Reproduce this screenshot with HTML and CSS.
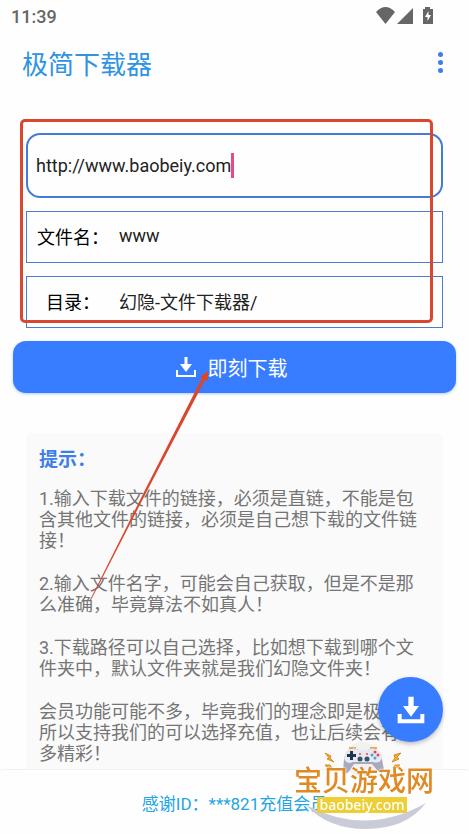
FILE: index.html
```html
<!DOCTYPE html>
<html lang="zh">
<head>
  <meta charset="UTF-8">
  <meta name="viewport" content="width=device-width, initial-scale=1.0">
  <title>极简下载器</title>
  <link rel="stylesheet" href="styles.css">
</head>
<body>
  <div class="status">
    <span class="time">11:39</span>
    <svg width="60" height="20" viewBox="0 0 60 20" fill="#666" aria-hidden="true">
      <path d="M1 6 Q10.500 -4 20 6 L10.500 18 Z"/>
      <path d="M22 18 L38 2 V18 Z"/>
      <path d="M48 3 h2 v-2 h5 v2 h3 v15 h-10 Z"/>
      <path fill="#fff" d="M53.500 5 L50 11 H52.500 V15 L56 9 H53.500 Z"/>
    </svg>
  </div>

  <header class="header">
    <h1 class="title">极简下载器</h1>
    <button class="menu" aria-label="菜单"><i></i><i></i><i></i></button>
  </header>

  <main class="main">
    <form class="form">
      <div class="field url">
        <input class="url-input" type="text" aria-label="下载链接" value="http://www.baobeiy.com">
        <span class="caret"></span>
      </div>
      <div class="field">
        <label for="fileName">文件名：</label>
        <input id="fileName" type="text" value="www">
      </div>
      <div class="field">
        <label for="folder">目录：</label>
        <input id="folder" type="text" value="幻隐-文件下载器/">
      </div>
      <div class="mark"></div>
    </form>

    <div class="action">
      <button class="btn" type="button">
        <svg width="24" height="24" viewBox="0 0 24 24" fill="#fff" aria-hidden="true">
          <path d="M10.500 2 h3 v7 h4.500 l-6 8 l-6 -8 h4.500 Z"/>
          <path d="M2 15 h2 v5 h16 v-5 h2 v7 h-20 Z"/>
        </svg>
        即刻下载
      </button>
      <svg class="arrow" width="120" height="230" viewBox="0 0 120 230" fill="#d9472f" aria-hidden="true">
        <path d="M118 0 L118 10 L115 9 L57 120 L1 229 L0 229 L55 119 L112 7 L110 6 Z"/>
      </svg>
    </div>

    <section class="tips">
      <h2>提示：</h2>
      <p>1.输入下载文件的链接，必须是直链，不能是包含其他文件的链接，必须是自己想下载的文件链接！</p>
      <p>2.输入文件名字，可能会自己获取，但是不是那么准确，毕竟算法不如真人！</p>
      <p>3.下载路径可以自己选择，比如想下载到哪个文件夹中，默认文件夹就是我们幻隐文件夹！</p>
      <p>会员功能可能不多，毕竟我们的理念即是极简，所以支持我们的可以选择充值，也让后续会有更多精彩！</p>
    </section>
  </main>

  <footer class="footer">感谢ID：***821充值会员</footer>

  <button class="fab" aria-label="下载">
    <svg width="32" height="32" viewBox="0 0 24 24" fill="#fff" aria-hidden="true">
      <path d="M10 2 h4 v7 h4 l-6 8 l-6 -8 h4 Z"/>
      <path d="M2 15 h3 v4 h14 v-4 h3 v7 h-20 Z"/>
    </svg>
  </button>

  <div class="brand">
    <svg class="brand-art" width="140" height="92" viewBox="0 0 140 92" aria-hidden="true">
      <circle cx="68" cy="18" r="17" fill="#f1f1f1"/>
      <path fill="#c9cbd8" d="M12 64 Q72 96 132 62 Q112 88 72 88 Q34 88 12 64 Z"/>
      <g fill="#eeb02e" stroke="#d98a2b" stroke-width="1">
        <path d="M31 12 L37 15 L36 17 L40 21 L33 18 L35 17 Z"/>
        <path d="M107 12 L100 14 L101 17 L98 21 L105 18 L103 16 Z"/>
        <path d="M31 24 L36 24 L38 27 L33 26 Z"/>
        <path d="M106 24 L101 24 L99 27 L104 26 Z"/>
      </g>
      <path d="M55 7 h7 M76 7 h7" fill="none" stroke="#e9b13c" stroke-width="2"/>
      <path fill="#a7aabd" d="M55 9 Q60 6 65 9 H73 Q78 6 83 9 Q87 11 88 18 L90 29 Q88 35 83 29 L78 23 H60 L56 29 Q51 36 49 30 L50 18 Q51 11 55 9 Z"/>
      <path fill="#e7e8f0" d="M55 9 Q60 6 65 9 H73 Q78 6 83 9 Q88 11 88 17 Q86 23 79 21 H59 Q52 24 50 17 Q51 11 55 9 Z"/>
      <path fill="#20344f" d="M56 10 h3 v3 h3 v3 h-3 v3 h-3 v-3 h-3 v-3 h3 Z"/>
      <g fill="#35556b"><circle cx="66" cy="18" r="2.500"/><circle cx="73" cy="18" r="2.500"/></g>
      <g fill="#e2484d"><circle cx="81" cy="11" r="1.500"/><circle cx="84" cy="14" r="1.500"/><circle cx="66" cy="13" r="1"/><circle cx="73" cy="13" r="1"/></g>
      <g fill="#4aa3d8"><circle cx="78" cy="14" r="1.500"/><circle cx="81" cy="17" r="1.500"/></g>
    </svg>
    <div class="brand-name">宝贝游戏网</div>
    <div class="brand-url">baobeiy.com</div>
  </div>
</body>
</html>
```
FILE: styles.css
```css
* {
  box-sizing: border-box;
}
body {
  font-family: Roboto, "Noto Sans CJK SC", sans-serif;
  background: #fefefe;
  margin: 0;
  min-height: 100vh;
  position: relative;
}
button, input {
  font-family: inherit;
}
.status {
  display: flex;
  justify-content: space-between;
  align-items: center;
  height: 32px;
  padding: 0 34px 0 11px;
  color: #666;
}
.time {
  font-size: 18px;
  font-weight: 500;
}
.header {
  display: flex;
  justify-content: space-between;
  align-items: center;
  height: 60px;
  padding: 0 22px;
}
.title {
  margin: 0;
  font-size: 26px;
  font-weight: 400;
  color: #2f93e4;
}
.menu {
  display: flex;
  flex-direction: column;
  align-items: center;
  gap: 3px;
  padding: 4px;
  border: none;
  background: none;
}
.menu i {
  width: 5px;
  height: 5px;
  border-radius: 50%;
  background: #3f7de8;
}
.main {
  padding-top: 41px;
}
.form {
  position: relative;
  display: flex;
  flex-direction: column;
  gap: 13px;
  padding: 0 26px;
}
.field {
  display: flex;
  align-items: center;
  height: 52px;
  padding: 0 10px 3px;
  border: 1px solid #4a7dcf;
}
.field label {
  width: 72px;
  margin-right: 10px;
  text-align: center;
  font-size: 18px;
  color: #000;
}
.field input {
  flex: 1;
  min-width: 0;
  padding: 0;
  border: none;
  outline: none;
  background: none;
  font-size: 18px;
  color: #222;
}
.field.url {
  height: 65px;
  padding: 0 8px;
  border: 2px solid #437bd9;
  border-radius: 14px;
}
.field .url-input {
  flex: none;
  field-sizing: content;
}
.caret {
  width: 3px;
  height: 25px;
  background: #e84a87;
}
/* red highlight frame around the inputs */
.mark {
  position: absolute;
  top: -14px;
  right: 36px;
  bottom: 5px;
  left: 20px;
  border: 3px solid #d9472f;
  border-radius: 5px;
}
.action {
  position: relative;
  padding: 13px 13px 0;
}
.btn {
  display: flex;
  justify-content: center;
  align-items: center;
  gap: 10px;
  width: 100%;
  height: 52px;
  padding: 0 8px 0 0;
  border: none;
  border-radius: 13px;
  background: #387dff;
  box-shadow: 0 1px 3px rgba(56,125,255,0.4);
  color: #fff;
  font-size: 20px;
  cursor: pointer;
}
.arrow {
  position: absolute;
  top: 43px;
  left: 90px;
}
.tips {
  margin: 40px 26px 0;
  padding: 13px;
  border-radius: 6px;
  background: #fafafa;
  color: #757575;
  font-size: 18px;
  line-height: 21px;
}
.tips h2 {
  margin: 0 0 14px;
  font-size: 19px;
  line-height: 28px;
  font-weight: 700;
  color: #3f7de8;
}
.tips p {
  margin: 0 0 22px;
}
.tips p:last-child {
  margin-bottom: 0;
}
.footer {
  position: fixed;
  right: 0;
  bottom: 0;
  left: 0;
  display: flex;
  justify-content: center;
  align-items: center;
  height: 65px;
  border-top: 1px solid #f1f1f1;
  border-radius: 4px;
  background: #fefefe;
  color: #22a5e3;
  font-size: 17px;
}
.fab {
  position: fixed;
  right: 26px;
  bottom: 92px;
  display: flex;
  justify-content: center;
  align-items: center;
  width: 65px;
  height: 65px;
  padding: 0;
  border: none;
  border-radius: 50%;
  background: #387dff;
  box-shadow: 0 2px 4px rgba(0,0,0,0.25);
  cursor: pointer;
}
.brand {
  position: fixed;
  right: 35px;
  bottom: 1px;
  display: flex;
  flex-direction: column;
  align-items: center;
  width: 140px;
  height: 92px;
  padding-top: 26px;
}
.brand-art {
  position: absolute;
  top: 0;
  left: 0;
}
.brand-name {
  position: relative;
  font-size: 28px;
  line-height: 30px;
  font-weight: 500;
  color: #e08a24;
  text-shadow: 0 0 2px #fff, 0 0 2px #fff;
}
.brand-url {
  position: relative;
  margin-right: 4px;
  padding: 0 2px;
  background: #edcf35;
  color: #fff;
  font-family: "Noto Sans", sans-serif;
  font-size: 14px;
  line-height: 16px;
  font-weight: 500;
}
```
